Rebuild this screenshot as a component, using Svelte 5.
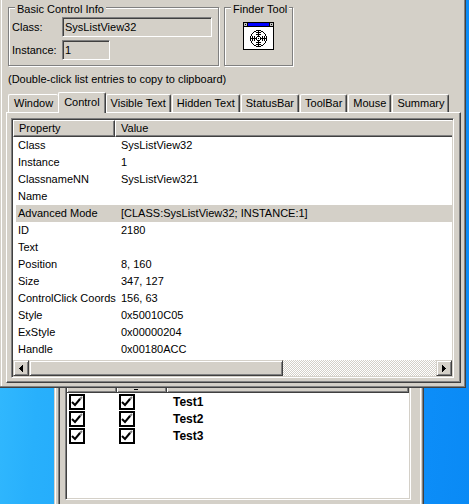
<script>
  const tabs = ['Window', 'Control', 'Visible Text', 'Hidden Text', 'StatusBar', 'ToolBar', 'Mouse', 'Summary'];
  let active = $state('Control');
  let selected = $state('Advanced Mode');
  const rows = [
    ['Class', 'SysListView32'],
    ['Instance', '1'],
    ['ClassnameNN', 'SysListView321'],
    ['Name', ''],
    ['Advanced Mode', '[CLASS:SysListView32; INSTANCE:1]'],
    ['ID', '2180'],
    ['Text', ''],
    ['Position', '8, 160'],
    ['Size', '347, 127'],
    ['ControlClick Coords', '156, 63'],
    ['Style', '0x50010C05'],
    ['ExStyle', '0x00000204'],
    ['Handle', '0x00180ACC']
  ];
  const tests = ['Test1', 'Test2', 'Test3'];
</script>

<div class="desktop">
  <section class="back">
    <div class="client">
      <div class="list">
        <div class="heads"><span></span><span><i></i></span><span></span></div>
        {#each tests as name}
          <div class="test">
            <input type="checkbox" checked aria-label="{name} enabled" />
            <input type="checkbox" checked aria-label="{name} flag" />
            <b>{name}</b>
          </div>
        {/each}
      </div>
    </div>
  </section>

  <main class="front">
    <div class="groups">
      <fieldset class="info">
        <legend>Basic Control Info</legend>
        <div class="field"><label for="cls">Class:</label><input id="cls" class="wide" value="SysListView32" readonly /></div>
        <div class="field"><label for="inst">Instance:</label><input id="inst" class="short" value="1" readonly /></div>
      </fieldset>
      <fieldset class="finder">
        <legend>Finder Tool</legend>
        <button class="target" aria-label="Finder Tool">
          <svg width="31" height="28" viewBox="0 0 31 28" shape-rendering="crispEdges">
            <rect width="31" height="28" fill="#000" />
            <rect x="1" y="5" width="29" height="22" fill="#fff" />
            <rect x="5" y="1" width="21" height="3" fill="#00f" />
            <path d="M1 1h3v3h-3zM27 1h3v3h-3z" fill="#c0c0c0" />
            <path d="M2 2h1v1h-1zM28 2h1v1h-1z" fill="#000" />
            <path d="M13 8h5v1h-5zM13 24h5v1h-5zM11 9h2v1h-2zM18 9h2v1h-2zM11 23h2v1h-2zM18 23h2v1h-2zM10 10h1v1h-1zM20 10h1v1h-1zM10 22h1v1h-1zM20 22h1v1h-1zM9 11h1v1h-1zM21 11h1v1h-1zM9 21h1v1h-1zM21 21h1v1h-1zM8 12h1v2h-1zM22 12h1v2h-1zM8 19h1v2h-1zM22 19h1v2h-1zM7 14h1v5h-1zM23 14h1v5h-1z" />
            <path d="M15 9h1v5h-1zM15 19h1v5h-1zM8 16h5v1h-5zM18 16h5v1h-5zM13 10h5v1h-5zM13 12h5v1h-5zM13 20h5v1h-5zM13 22h5v1h-5zM9 14h1v5h-1zM11 14h1v5h-1zM19 14h1v5h-1zM21 14h1v5h-1z" />
            <path d="M14 14h3v1h-3zM14 18h3v1h-3zM13 15h1v3h-1zM17 15h1v3h-1zM15 16h1v1h-1z" />
          </svg>
        </button>
      </fieldset>
    </div>
    <p>(Double-click list entries to copy to clipboard)</p>
    <div class="tabs" role="tablist">
      {#each tabs as t}
        <button role="tab" class:active={active === t} aria-selected={active === t} onclick={() => (active = t)}>{t}</button>
      {/each}
    </div>
    <div class="panel">
      <div class="view">
        <table>
          <thead><tr><th class="prop">Property</th><th>Value</th></tr></thead>
          <tbody>
            {#each rows as [k, v]}
              <tr class:sel={selected === k} onclick={() => (selected = k)}><td>{k}</td><td>{v}</td></tr>
            {/each}
          </tbody>
        </table>
        <div class="scroll">
          <button aria-label="Scroll left"><svg width="4" height="7" shape-rendering="crispEdges"><path d="M4 0v7h-1v-1h-1v-1h-1v-1h-1v-1h1v-1h1v-1h1v-1z" /></svg></button>
          <div class="track"><div class="thumb"></div></div>
          <button aria-label="Scroll right"><svg width="4" height="7" shape-rendering="crispEdges"><path d="M0 0v7h1v-1h1v-1h1v-1h1v-1h-1v-1h-1v-1h-1v-1z" /></svg></button>
        </div>
      </div>
    </div>
  </main>
</div>

<style>
  :global(body) { background: #1c9af8; }
  .desktop {
    position: relative;
    min-height: 100vh;
    overflow: hidden;
    background: linear-gradient(95deg, #38beff 0, #28b0fc 14%, #0d8ffa 85%, #0a8af5 100%);
    font: 11px/13px "Liberation Sans", Arial, sans-serif;
    color: #000;
  }
  * { box-sizing: border-box; }
  button, input { font: inherit; color: inherit; margin: 0; padding: 0; border: 0; border-radius: 0; background: #d4d0c8; }

  .front {
    position: relative;
    margin-right: 3px;
    padding: 3px 4px 4px 6px;
    background: #d4d0c8;
    border-right: 1px solid #404040;
    border-bottom: 1px solid #404040;
    box-shadow: inset -1px -1px #808080, inset 1px 0 #d4d0c8, inset 2px 0 #fff;
  }
  .groups { display: flex; gap: 4px; padding-left: 2px; }
  fieldset {
    position: relative;
    margin: 4px 0 0;
    height: 59px;
    padding: 0;
    border: 1px solid #808080;
    box-shadow: 1px 1px #fff, inset 1px 1px #fff;
    min-width: 0;
  }
  legend { position: absolute; top: -5px; left: 6px; padding: 0 2px; background: #d4d0c8; white-space: nowrap; }
  .info { width: 211px; padding: 9px 0 0 3px; }
  .finder { width: 69px; margin-left: 1px; padding: 14px 0 0 18px; }
  .field { display: flex; align-items: center; margin-bottom: 3px; }
  label { width: 50px; }
  .field input {
    height: 20px;
    padding: 0 1px 0 2px;
    border: 1px solid;
    border-color: #808080 #fff #fff #808080;
    box-shadow: inset 1px 1px #404040;
    outline: 0;
  }
  .wide { width: 150px; }
  .short { width: 48px; }
  .target { display: block; height: 28px; }
  .target svg { display: block; }
  p { margin: 7px 0 0 2px; }

  .tabs { display: flex; align-items: flex-end; height: 20px; margin-top: 6px; padding-left: 2px; }
  .tabs button {
    height: 18px;
    padding: 0 4px;
    margin-right: 1px;
    border-top: 1px solid #fff;
    border-left: 1px solid #fff;
    border-right: 1px solid #404040;
    border-radius: 2px 2px 0 0;
    box-shadow: inset -1px 0 #808080;
    white-space: nowrap;
  }
  .tabs .active { position: relative; z-index: 1; height: 21px; margin: 0 0 -1px -1px; padding: 0 5px 2px; }
  .tabs button:first-child:not(.active) { border-right: 0; padding: 0 5px; box-shadow: none; }
  .panel {
    padding: 5px 6px 4px 4px;
    border: 1px solid;
    border-color: #fff #404040 #404040 #fff;
    box-shadow: inset -1px -1px #808080;
  }
  .view {
    padding: 1px;
    border: 1px solid;
    border-color: #808080 #fff #fff #808080;
    box-shadow: inset 1px 1px #404040, inset -1px -1px #d4d0c8;
    background: #fff;
  }
  table { width: 100%; border-collapse: separate; border-spacing: 0; table-layout: fixed; }
  th {
    height: 17px;
    padding: 0 5px;
    text-align: left;
    font-weight: 400;
    background: #d4d0c8;
    border-top: 1px solid #fff;
    border-left: 1px solid #fff;
    border-bottom: 1px solid #404040;
    box-shadow: inset 0 -1px #808080;
  }
  .prop { width: 102px; border-right: 1px solid #404040; box-shadow: inset -1px -1px #808080; }
  td { height: 17px; padding: 0 0 0 5px; white-space: nowrap; }
  td + td { padding-left: 6px; }
  .sel td { background: #d4d0c8; }
  .sel td:first-child { background: linear-gradient(90deg, #fff 3px, #d4d0c8 3px); }

  .scroll { display: flex; height: 16px; margin-top: 2px; }
  .scroll button, .thumb {
    width: 16px;
    height: 16px;
    background: #d4d0c8;
    border: 1px solid;
    border-color: #d4d0c8 #404040 #404040 #d4d0c8;
    box-shadow: inset 1px 1px #fff, inset -1px -1px #808080;
  }
  .scroll button { display: grid; place-items: center; }
  .track { flex: 1; background: repeating-conic-gradient(#fff 0 25%, #d4d0c8 0 50%) 0 0 / 2px 2px; }
  .scroll .thumb { width: calc(100% * 5 / 8); }

  .back {
    position: absolute;
    inset: 360px 45px 0 54px;
    background: #d4d0c8;
    border-left: 1px solid #d4d0c8;
    border-right: 1px solid #404040;
    box-shadow: inset 1px 0 #fff, inset -1px 0 #808080;
    padding: 0 2px 0 4px;
  }
  .client { height: 100%; padding: 0 9px 4px 5px; border-left: 1px solid #404040; border-right: 1px solid #fff; box-shadow: -1px 0 #808080; }
  .list { height: 140px; border: 1px solid; border-color: #808080 #fff #fff #808080; background: #fff; box-shadow: inset 1px 0 #404040, inset -1px -1px #d4d0c8; padding: 0 1px; }
  .heads { display: flex; height: 32px; }
  .heads span { width: 50px; background: #d4d0c8; border: solid #404040; border-width: 0 1px 1px 0; box-shadow: inset 1px 0 #fff, inset -1px -1px #808080; }
  .heads span:last-child { flex: 1; }
  .heads i { display: block; width: 4px; height: 1px; margin: 28px 0 0 17px; background: #000; }
  .test { display: flex; height: 17px; padding: 1px 0 0 2px; }
  .test input {
    appearance: none;
    width: 16px;
    height: 16px;
    margin-right: 34px;
    border: 2px solid #000;
    background: #fff url("data:image/svg+xml,%3Csvg xmlns='http://www.w3.org/2000/svg' viewBox='0 0 12 12' fill='none' stroke-width='2'%3E%3Cpath d='M8 4l3-3' stroke='gray'/%3E%3Cpath d='M1 6l3 3 5-6' stroke='black'/%3E%3C/svg%3E");
  }
  .test b { margin-left: 4px; font-size: 12px; line-height: 16px; }
</style>
